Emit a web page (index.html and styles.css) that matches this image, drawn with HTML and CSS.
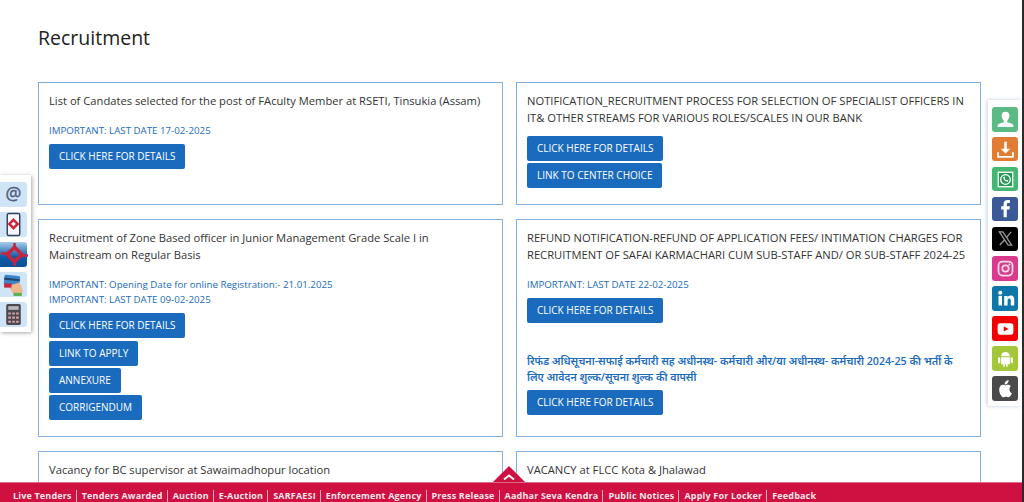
FILE: index.html
```html
<!DOCTYPE html>
<html lang="en">
<head>
<meta charset="utf-8">
<title>Recruitment</title>
<link rel="stylesheet" href="styles.css">
</head>
<body>
<div class="frame">
<main class="page">
  <h1 class="title">Recruitment</h1>
  <div class="grid">
    <section class="card">
      <p class="lead">List of Candates selected for the post of FAculty Member at RSETI, Tinsukia (Assam)</p>
      <p class="note">IMPORTANT: LAST DATE 17-02-2025</p>
      <div class="btns"><a class="btn">CLICK HERE FOR DETAILS</a></div>
    </section>
    <section class="card">
      <p class="lead">NOTIFICATION_RECRUITMENT PROCESS FOR SELECTION OF SPECIALIST OFFICERS IN IT&amp; OTHER STREAMS FOR VARIOUS ROLES/SCALES IN OUR BANK</p>
      <div class="btns direct"><a class="btn">CLICK HERE FOR DETAILS</a><a class="btn">LINK TO CENTER CHOICE</a></div>
    </section>
    <section class="card">
      <p class="lead">Recruitment of Zone Based officer in Junior Management Grade Scale I in Mainstream on Regular Basis</p>
      <p class="note">IMPORTANT: Opening Date for online Registration:- 21.01.2025<br>IMPORTANT: LAST DATE 09-02-2025</p>
      <div class="btns"><a class="btn">CLICK HERE FOR DETAILS</a><a class="btn">LINK TO APPLY</a><a class="btn">ANNEXURE</a><a class="btn">CORRIGENDUM</a></div>
    </section>
    <section class="card">
      <p class="lead">REFUND NOTIFICATION-REFUND OF APPLICATION FEES/ INTIMATION CHARGES FOR RECRUITMENT OF SAFAI KARMACHARI CUM SUB-STAFF AND/ OR SUB-STAFF 2024-25</p>
      <p class="note">IMPORTANT: LAST DATE 22-02-2025</p>
      <div class="btns"><a class="btn">CLICK HERE FOR DETAILS</a></div>
      <p class="hindi">रिफंड अधिसूचना-सफाई कर्मचारी सह अधीनस्थ- कर्मचारी और/या अधीनस्थ- कर्मचारी 2024-25 की भर्ती के<br>लिए आवेदन शुल्क/सूचना शुल्क की वापसी</p>
      <div class="btns"><a class="btn">CLICK HERE FOR DETAILS</a></div>
    </section>
    <section class="card">
      <p class="lead">Vacancy for BC supervisor at Sawaimadhopur location</p>
    </section>
    <section class="card">
      <p class="lead">VACANCY at FLCC Kota &amp; Jhalawad</p>
    </section>
  </div>
</main>

<aside class="rail left-rail">
  <span class="tool"><svg viewBox="0 0 24 24"><text x="12" y="17.500" text-anchor="middle" class="at">@</text></svg></span>
  <span class="tool"><svg viewBox="0 0 24 24"><rect x="6" y="1.500" width="12" height="21" rx="1.500" fill="#f4f6fb" stroke="#34405e" stroke-width="1.400"/><path d="M12 7.500l4 4-4 4-4-4z" fill="none" stroke="#d3233c" stroke-width="2.400"/></svg></span>
  <span class="tool sel"><svg viewBox="0 0 24 24"><path d="M13 5l7 7-7 7-7-7z" fill="none" stroke="#c8243f" stroke-width="3.400"/><path d="M0 11h6l2-2M26 13h-6l-2 2M13 1v4M13 23v-4" fill="none" stroke="#c8243f" stroke-width="2.400"/></svg></span>
  <span class="tool"><svg viewBox="0 0 24 24"><rect x="3" y="3" width="15" height="10" rx="1.500" fill="#3a86c8" transform="rotate(6 9 8)"/><rect x="3" y="6" width="15" height="2" fill="#24456e" transform="rotate(6 9 8)"/><path d="M8 15l3-3 7-2 3 8-1 3h-8z" fill="#eeb78c"/><rect x="3" y="11" width="7" height="4" fill="#c8243f"/><rect x="12" y="20" width="8" height="3" fill="#5cb050"/></svg></span>
  <span class="tool"><svg viewBox="0 0 24 24"><rect x="5" y="2" width="14" height="20" rx="1.500" fill="#4a4a4e"/><rect x="7" y="4" width="10" height="3.500" fill="#b9b9bd"/><path d="M7 10h2.500v2H7zM10.800 10h2.500v2h-2.500zM14.500 10H17v2h-2.500zM7 14h2.500v2H7zM10.800 14h2.500v2h-2.500zM14.500 14H17v2h-2.500zM7 18h2.500v2H7zM10.800 18h2.500v2h-2.500zM14.500 18H17v2h-2.500z" fill="#d9a0a8"/></svg></span>
</aside>

<aside class="rail right-rail">
  <span class="soc green"><svg viewBox="0 0 24 24"><path d="M12 3a4.500 4.500 0 0 1 4.500 4.500c0 2.500-1.500 5-2.500 6v1.500c2 .8 7 1.500 7 3.500v2H3v-2c0-2 5-2.700 7-3.500v-1.500c-1-1-2.500-3.500-2.500-6A4.500 4.500 0 0 1 12 3z" fill="#fff"/></svg></span>
  <span class="soc orange"><svg viewBox="0 0 24 24"><path d="M10.500 3h3v8h4L12 16.500 6.500 11h4z" fill="#fff"/><path d="M3.500 15v5.500h17V15" fill="none" stroke="#fff" stroke-width="2"/></svg></span>
  <span class="soc wa"><svg viewBox="0 0 24 24"><rect x="3" y="3" width="18" height="18" fill="#fff"/><rect x="4.500" y="4.500" width="15" height="15" fill="#2a9a58"/><circle cx="12" cy="12" r="5.500" fill="none" stroke="#fff" stroke-width="1.500"/><path d="M9.500 9.500c0 3 2 5 5 5l.7-1.500-1.700-.8-.7.600c-.8-.4-1.400-1-1.700-1.700l.6-.7-.8-1.700z" fill="#fff"/></svg></span>
  <span class="soc fb"><svg viewBox="0 0 24 24"><path d="M13.500 22v-9h3l.5-3.500h-3.500V7.300c0-1 .3-1.700 1.800-1.700H17V2.500c-.4 0-1.500-.1-2.700-.1-2.700 0-4.500 1.600-4.500 4.600v2.500H7V13h2.800v9z" fill="#fff"/></svg></span>
  <span class="soc x"><svg viewBox="0 0 24 24"><path d="M5 4.500h4l10 15h-4z" fill="none" stroke="#999" stroke-width="1.500"/><path d="M18.500 4.500L13 11M11 13.500L5.500 19.500" stroke="#999" stroke-width="1.500"/></svg></span>
  <span class="soc ig"><svg viewBox="0 0 24 24"><rect x="4" y="4" width="16" height="16" rx="4.500" fill="none" stroke="#f6dbe8" stroke-width="2"/><circle cx="12" cy="12" r="3.700" fill="none" stroke="#f6dbe8" stroke-width="2"/><circle cx="16.500" cy="7.500" r="1.100" fill="#f6dbe8"/></svg></span>
  <span class="soc li"><svg viewBox="0 0 24 24"><circle cx="6" cy="5.500" r="2.300" fill="#fff"/><rect x="4" y="9" width="4" height="11" fill="#fff"/><path d="M10.500 9h3.800v1.600c.6-1 1.900-1.900 3.500-1.900 3.300 0 4.200 2.100 4.200 5V20h-4v-5.500c0-1.400-.3-2.500-1.700-2.500s-1.900 1.100-1.900 2.500V20h-3.900z" fill="#fff"/></svg></span>
  <span class="soc yt"><svg viewBox="0 0 24 24"><rect x="3" y="6" width="18" height="13" rx="3" fill="#fff"/><path d="M10 9.500l5.500 3-5.500 3z" fill="#f00000"/></svg></span>
  <span class="soc an"><svg viewBox="0 0 24 24"><path d="M7 9.500a5 5 0 0 1 10 0z" fill="#fff"/><path d="M7 10.500h10v8H14.500v3h-1.800v-3h-1.400v3H9.500v-3H7z" fill="#fff"/><rect x="3.500" y="10.500" width="2.500" height="7" rx="1.200" fill="#fff"/><rect x="18" y="10.500" width="2.500" height="7" rx="1.200" fill="#fff"/></svg></span>
  <span class="soc ap"><svg viewBox="0 0 24 24"><path d="M16.500 12.500c0-2 1.500-3 1.700-3.200-1-1.400-2.400-1.600-3-1.600-1.300-.1-2.500.8-3.200.8s-1.700-.8-2.800-.8C7.700 7.700 4.800 9.200 4.800 13.400c0 1.300.2 2.600.7 3.900.6 1.700 2.400 4.700 4 4.700 1 0 1.700-.7 3-.7s1.900.7 3 .7c1.700 0 3.100-2.700 3.800-4.500-2.200-.9-2.800-3.100-2.800-5z" fill="#fff"/><path d="M14.300 5.900c.9-1.100 1.400-2.300 1.200-3.600-1.200.1-2.500.8-3.300 1.800-.7.800-1.300 2-1.100 3.300 1.300 0 2.500-.6 3.200-1.500z" fill="#fff"/></svg></span>
</aside>

<footer class="ticker">
  <a class="up"><svg viewBox="0 0 14 8"><path d="M2 6.500L7 2.500l5 4" fill="none" stroke="#fff" stroke-width="2"/></svg></a>
  <nav class="links"><a>Live Tenders</a><a>Tenders Awarded</a><a>Auction</a><a>E-Auction</a><a>SARFAESI</a><a>Enforcement Agency</a><a>Press Release</a><a>Aadhar Seva Kendra</a><a>Public Notices</a><a>Apply For Locker</a><a>Feedback</a></nav>
</footer>
</div>
</body>
</html>
```
FILE: styles.css
```css
html, body { margin: 0; height: 502px; overflow: hidden; background: #2b2b2b; }
body { font-family: "Open Sans", "Noto Sans", sans-serif; color: #333; }
.frame { position: relative; width: 1022px; height: 502px; overflow: hidden; background: #fff; }
.page { padding: 26px 41px 0 38px; }
.title { margin: 0 0 32px; font-size: 19.500px; line-height: 24px; font-weight: 400; color: #222; }
.grid { display: grid; grid-template-columns: 465px 465px; column-gap: 13px; row-gap: 13.700px; }
.card { border: 1px solid #7fb0e0; padding: 9px 10px 16px; }
.card p { margin: 0; }
.card .lead { font-size: 11.200px; line-height: 17px; color: #333; }
.card .note { margin-top: 14px; font-size: 9.730px; line-height: 15.500px; font-weight: 500; color: #1a6bbd; }
.card .hindi { margin-top: 29.700px; font-size: 10.650px; line-height: 16px; font-weight: 600; color: #1a6bbd; }
.btns { display: flex; flex-direction: column; align-items: flex-start; gap: 2.300px; margin-top: 5.500px; }
.btns.direct { margin-top: 10px; }
.btn { background: #1a6bbd; color: #fff; font-size: 10px; line-height: 25px; height: 25px; padding: 0 10px; border-radius: 2px; }
.rail { position: absolute; background: #fff; display: flex; flex-direction: column; }
.left-rail { left: 0; top: 175px; width: 31px; height: 157px; box-sizing: border-box; padding-top: 7px; gap: 5px; box-shadow: 1px 1px 4px rgba(0,0,0,.35); }
.tool { width: 27px; height: 25px; background: #cfe5f7; border-radius: 0 3px 3px 0; display: flex; justify-content: center; }
.tool svg { width: 25px; height: 25px; overflow: visible; }
.tool.sel { background: linear-gradient(#a8cdea, #0d5aa8 60%, #0a5098); }
.at { font: 400 17px "Open Sans", sans-serif; fill: #4f5d7e; stroke: #4f5d7e; stroke-width: .4px; }
.right-rail { right: 0; top: 100px; width: 34px; height: 306px; box-sizing: border-box; padding: 7px 0 0 4px; gap: 5.400px; box-shadow: -1px 0 4px rgba(120,150,190,.45); }
.soc { width: 26px; height: 24.500px; border-radius: 3px; display: flex; align-items: center; justify-content: center; }
.soc svg { width: 21px; height: 21px; }
.green { background: #5cba84; } .orange { background: #e07c33; } .wa { background: #46b673; }
.fb { background: #3b5998; } .x { background: #000; } .ig { background: #d93a8c; }
.li { background: #0e76a8; } .yt { background: #f00000; } .an { background: #a4c639; } .ap { background: #4a4a4a; }
.ticker { position: absolute; left: 0; right: 0; bottom: 0; height: 20px; background: #ce1141; border-top: 1px solid #e06a88; box-sizing: border-box; }
.links { display: flex; align-items: center; height: 12px; margin-top: 7px; padding-left: 13px; font-size: 9px; line-height: 12px; font-weight: 700; color: #f8e6ec; letter-spacing: .17px; white-space: nowrap; }
.links a + a { margin-left: 4px; padding-left: 5px; border-left: 1px solid #f0a8bb; }
.up { position: absolute; left: 493px; top: -17px; width: 32px; height: 16px; background: #ce1141; clip-path: polygon(50% 0, 100% 100%, 0 100%); display: flex; justify-content: center; align-items: flex-end; }
.up svg { width: 14px; height: 8px; margin-bottom: 1px; }
```
